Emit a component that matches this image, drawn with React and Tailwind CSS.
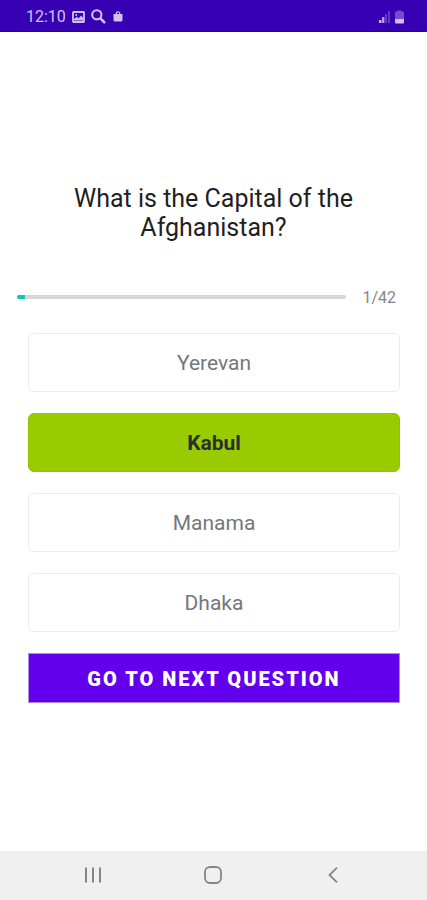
import { useState } from 'react'
import { clsx } from 'clsx'

const TOTAL_QUESTIONS = 42

const question = {
  number: 1,
  text: 'What is the Capital of the Afghanistan?',
  options: ['Yerevan', 'Kabul', 'Manama', 'Dhaka'],
  answer: 'Kabul'
}

function StatusBar() {
  return (
    <header className="flex h-8 shrink-0 items-center justify-between border-b border-[#2c00a0] bg-[#3700b3] pl-[26px] pr-[23px] text-[#d0c0f2]">
      <div className="flex items-center pt-[2px]">
        <span className="w-[46px] text-base leading-5">12:10</span>
        {/* Gallery */}
        <svg className="h-3 w-[13px]" viewBox="0 0 13 12" fill="none" aria-hidden="true">
          <rect x="1" y="1" width="11" height="10" rx="0.5" stroke="currentColor" strokeWidth="1.8" />
          <path d="M2 9.5V8L4.8 5.8 6.6 7.4 9 4.6l2.4 2.6v2.3Z" fill="currentColor" />
          <circle cx="4.2" cy="3.9" r="1" fill="currentColor" />
        </svg>
        {/* Search */}
        <svg className="ml-1.5 h-[15px] w-[15px]" viewBox="0 0 15 15" fill="none" stroke="currentColor" aria-hidden="true">
          <circle cx="5.8" cy="5.8" r="4.6" strokeWidth="2.1" />
          <path d="m9 9 5 5" strokeWidth="2.5" />
        </svg>
        {/* Shopping bag */}
        <svg className="ml-[7px] h-[11px] w-[10px]" viewBox="0 0 10 11" aria-hidden="true">
          <path d="M0.5 3h9v6A1.5 1.5 0 0 1 8 10.5H2A1.5 1.5 0 0 1 0.5 9Z" fill="currentColor" />
          <path d="M3.2 3.5V2.6a1.8 1.8 0 0 1 3.6 0v0.9" fill="none" stroke="currentColor" strokeWidth="1.2" />
        </svg>
      </div>
      <div className="flex items-center gap-1 pt-[2px]">
        {/* Signal */}
        <svg className="h-[14px] w-3" viewBox="0 0 12 14" fill="currentColor" aria-hidden="true">
          <path d="M0 10h2.4v3H0Z" />
          <path d="M3 7h2.4v6H3Z" opacity="0.8" />
          <path d="M6 4h2v9H6ZM9 1h2v12H9Z" opacity="0.3" />
        </svg>
        {/* Battery */}
        <svg className="h-[14px] w-[9px]" viewBox="0 0 9 14" fill="currentColor" aria-hidden="true">
          <path d="M2.5 0.5h4v1H8a1 1 0 0 1 1 1V9H0V2.5a1 1 0 0 1 1-1h1.5Z" opacity="0.4" />
          <path d="M0 9h9v3.5a1 1 0 0 1-1 1H1a1 1 0 0 1-1-1Z" />
        </svg>
      </div>
    </header>
  )
}

function Progress({ current, total }) {
  return (
    <div className="flex items-center pl-[17px] pr-[31px]">
      <div
        role="progressbar"
        aria-label="Quiz progress"
        aria-valuenow={current}
        aria-valuemin={0}
        aria-valuemax={total}
        className="h-1 flex-1 overflow-hidden rounded-sm bg-[#d6d6d6]"
      >
        <div className="h-full bg-[#03cdb0]" style={{ width: `${(current / total) * 100}%` }} />
      </div>
      <span className="ml-4 pt-[2px] text-base leading-5 text-[#858585]">
        {current}/{total}
      </span>
    </div>
  )
}

function Option({ label, correct, onClick }) {
  return (
    <button
      type="button"
      onClick={onClick}
      className={clsx(
        'h-[59px] w-full rounded-md border pt-[2px] text-[21px]',
        correct
          ? 'border-[#8fc400] bg-[#99cc00] font-bold text-[#2b2f33]'
          : 'border-[#ebebeb] bg-white text-[#74777a]'
      )}
    >
      {label}
    </button>
  )
}

function NavBar() {
  return (
    <nav className="grid h-[49px] shrink-0 grid-cols-3 bg-[#f0f0f0] pb-[2px] pl-[33px] pr-[34px] text-[#858585]">
      <button type="button" aria-label="Recent apps" className="flex items-center justify-center">
        <svg className="h-4 w-4" viewBox="0 0 16 16" stroke="currentColor" strokeWidth="2" aria-hidden="true">
          <path d="M1 0.5v15M8 0.5v15M15 0.5v15" />
        </svg>
      </button>
      <button type="button" aria-label="Home" className="flex items-center justify-center">
        <svg className="h-[18px] w-[18px]" viewBox="0 0 18 18" fill="none" stroke="currentColor" strokeWidth="1.8" aria-hidden="true">
          <rect x="1" y="1" width="16" height="16" rx="5" />
        </svg>
      </button>
      <button type="button" aria-label="Back" className="flex items-center justify-center">
        <svg className="h-4 w-[10px]" viewBox="0 0 10 16" fill="none" stroke="currentColor" strokeWidth="1.8" aria-hidden="true">
          <path d="M9 0.7 1.5 8 9 15.3" />
        </svg>
      </button>
    </nav>
  )
}

export default function App() {
  const [selected, setSelected] = useState('Kabul')

  return (
    <div className="flex min-h-screen flex-col bg-white font-[Roboto,sans-serif]">
      <StatusBar />

      <main className="flex flex-1 flex-col justify-center pt-1">
        <h1 className="mx-auto max-w-xs px-4 text-center text-[25px] leading-[29px] text-[#1f1f1f]">
          {question.text}
        </h1>

        <div className="mt-11">
          <Progress current={question.number} total={TOTAL_QUESTIONS} />
        </div>

        <div className="mt-[25px] flex flex-col gap-[21px] pl-7 pr-[27px]">
          {question.options.map((option) => (
            <Option
              key={option}
              label={option}
              correct={option === selected && option === question.answer}
              onClick={() => setSelected(option)}
            />
          ))}
          <button
            type="button"
            className="h-[50px] w-full border border-[#a98be8] bg-[#6200ee] pt-[2px] text-xl font-black tracking-widest text-white uppercase"
          >
            Go to next question
          </button>
        </div>
      </main>

      <NavBar />
    </div>
  )
}
